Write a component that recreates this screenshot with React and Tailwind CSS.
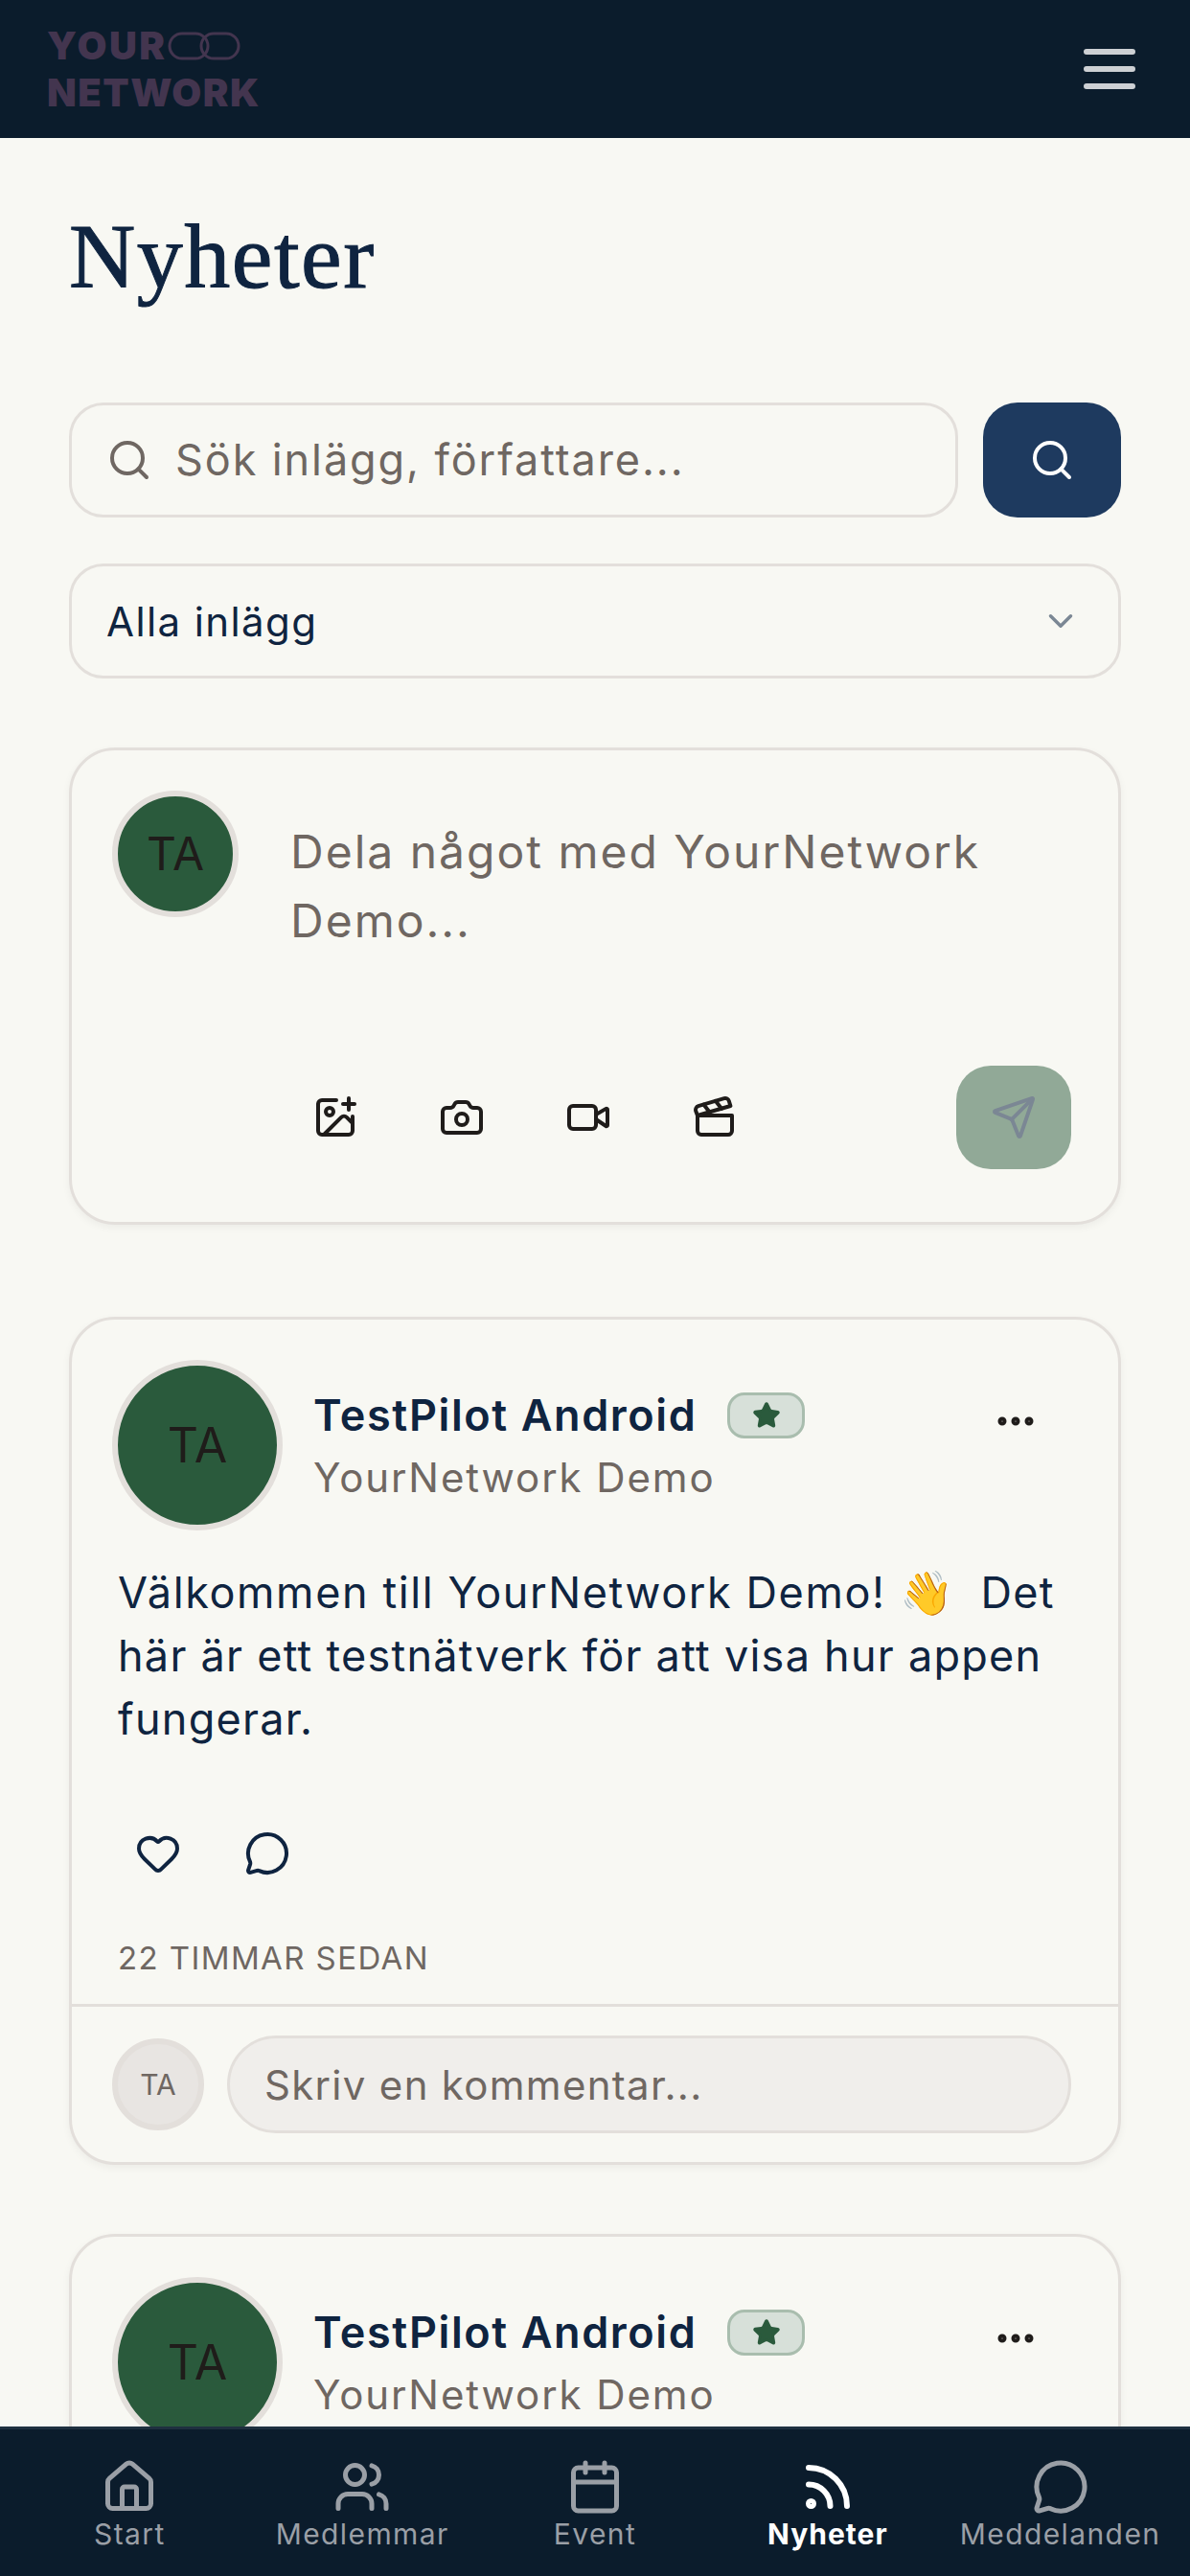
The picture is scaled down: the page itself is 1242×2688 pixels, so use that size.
import {
  Search, ChevronDown, ImagePlus, Camera, Video, Clapperboard, Send, Star, Ellipsis,
  Heart, MessageCircle, House, Users, Calendar, Rss,
} from 'lucide-react'

// the last post only shows its head above the bottom bar
function Post({ preview }) {
  return (
    <article className={`mb-[72px] rounded-[48px] border-[3px] border-[#e3dfdb] bg-[#f8f8f3] shadow-[0_3px_9px_rgba(0,0,0,0.05)] ${preview ? 'h-[500px]' : ''}`}>
      <div className="flex px-[42px] pt-[42px]">
        <div className="flex h-[178px] w-[178px] shrink-0 items-center justify-center rounded-full border-[6px] border-[#e3dfdb] bg-[#2a5a3c] text-[50px] text-[#1f1c1a]">
          TA
        </div>
        <div className="ml-[32px] flex-1 pt-[28px]">
          <div className="flex items-center">
            <span className="text-[45px] font-semibold leading-[54px] tracking-[1.6px] text-[#0f2440]">TestPilot Android</span>
            <span className="ml-[32px] flex h-[48px] w-[81px] items-center justify-center rounded-[18px] border-[3px] border-[#a9bdae] bg-[#d7e0d9]">
              <Star size={30} fill="#2a5a3c" color="#2a5a3c" />
            </span>
            <Ellipsis size={48} color="#1f1c1a" strokeWidth={2.5} className="ml-auto mr-[41px] mt-[12px]" />
          </div>
          <div className="mt-[8px] text-[42px] leading-[54px] tracking-[1.9px] text-[#6f6762]">YourNetwork Demo</div>
        </div>
      </div>
      {!preview && (
        <>
          <p className="mt-[32px] whitespace-nowrap px-[48px] text-[45px] leading-[66px] tracking-[1.26px] text-[#0f2440]">
            <span className="tracking-[1.6px]">Välkommen till YourNetwork Demo!</span> 👋&nbsp; Det<br />här är ett testnätverk för att visa hur appen<br />fungerar.
          </p>
          <div className="ml-[66px] mt-[83px] flex items-center gap-[66px]">
            <Heart size={48} color="#0f2440" />
            <MessageCircle size={48} color="#0f2440" />
          </div>
          <div className="mt-[63px] px-[48px] text-[33px] leading-[44px] tracking-[1.4px] text-[#6f6762]">22 TIMMAR SEDAN</div>
          <div className="mt-[26px] flex items-center gap-[24px] border-t-[3px] border-[#e3dfdb] pb-[30px] pl-[42px] pr-[49px] pt-[30px]">
            <div className="flex h-[96px] w-[96px] shrink-0 items-center justify-center rounded-full border-[6px] border-[#e3dfdb] bg-[#e8e5e2] text-[30px] text-[#6f6762]">
              TA
            </div>
            <div className="flex h-[102px] flex-1 items-center rounded-full border-[3px] border-[#e3dfdb] bg-[#f0eeeb] pl-[36px] text-[42px] tracking-[1.3px] text-[#6f6762]">
              Skriv en kommentar...
            </div>
          </div>
        </>
      )}
    </article>
  )
}

const composerIcons = [ImagePlus, Camera, Video, Clapperboard]

const navItems = [
  { label: 'Start', Icon: House },
  { label: 'Medlemmar', Icon: Users },
  { label: 'Event', Icon: Calendar },
  { label: 'Nyheter', Icon: Rss, active: true },
  { label: 'Meddelanden', Icon: MessageCircle },
]

export default function App() {
  return (
    <div className="flex h-[2688px] w-[1242px] flex-col overflow-hidden bg-[#f8f8f3] font-[Inter,sans-serif]">
      <header className="flex h-[144px] shrink-0 items-center justify-between bg-[#0b1c2c] pl-[49px] pr-[48px]">
        <div className="text-[40px] font-black leading-[49px] text-[#43354f]">
          <div className="flex items-center tracking-[2.5px]">
            YOUR
            <svg width="76" height="30" viewBox="0 0 76 30" fill="none" stroke="#43354f" strokeWidth="3">
              <rect x="2" y="2" width="40" height="26" rx="13" />
              <rect x="35" y="2" width="39" height="26" rx="13" />
            </svg>
          </div>
          <div className="tracking-[1.5px]">NETWORK</div>
        </div>
        <svg width="72" height="72" viewBox="0 0 24 24" fill="none" stroke="#cdd0d4" strokeWidth="2" strokeLinecap="round">
          <path d="M4 6h16M4 12h16M4 18h16" />
        </svg>
      </header>

      <main className="min-h-0 flex-1 overflow-hidden px-[72px]">
        <h1 className="mt-[70px] font-['Liberation_Serif',serif] text-[96px] leading-[108px] tracking-[1.5px] text-[#0f2440] [-webkit-text-stroke:1px_#0f2440]">Nyheter</h1>

        <div className="mt-[98px] flex gap-[26px]">
          <div className="flex h-[120px] flex-1 items-center rounded-[36px] border-[3px] border-[#e3dfdb] pl-[36px] text-[45px] tracking-[1.9px] text-[#6f6762]">
            <Search size={48} color="#6f6762" />
            <span className="ml-[24px]">Sök inlägg, författare...</span>
          </div>
          <button className="flex h-[120px] w-[144px] items-center justify-center rounded-[36px] bg-[#1e3a5f]">
            <Search size={48} color="#ffffff" />
          </button>
        </div>

        <div className="mt-[48px] flex h-[120px] items-center justify-between rounded-[36px] border-[3px] border-[#e3dfdb] pl-[36px] pr-[39px] text-[42px] tracking-[1.4px] text-[#0f2440]">
          Alla inlägg
          <ChevronDown size={42} color="#7b8794" />
        </div>

        <section className="mb-[96px] mt-[72px] h-[498px] rounded-[48px] border-[3px] border-[#e3dfdb] bg-[#f8f8f3] shadow-[0_3px_9px_rgba(0,0,0,0.05)]">
          <div className="flex pl-[42px] pt-[42px]">
            <div className="flex h-[132px] w-[132px] shrink-0 items-center justify-center rounded-full border-[6px] border-[#e3dfdb] bg-[#2a5a3c] text-[48px] text-[#1f1c1a]">
              TA
            </div>
            <p className="ml-[54px] mt-[28px] text-[48px] leading-[72px] tracking-[2px] text-[#6f6762]">
              Dela något med YourNetwork<br />Demo...
            </p>
          </div>
          <div className="ml-[230px] mr-[49px] mt-[115px] flex items-center">
            <div className="flex gap-[42px]">
              {composerIcons.map((Icon, i) => (
                <div key={i} className="flex h-[90px] w-[90px] items-center justify-center">
                  <Icon size={48} color="#1f1c1a" />
                </div>
              ))}
            </div>
            <button className="ml-auto flex h-[108px] w-[120px] items-center justify-center rounded-[36px] bg-[#91a997]">
              <Send size={48} color="#7b8794" />
            </button>
          </div>
        </section>

        <Post />
        <Post preview />
      </main>

      <nav className="grid h-[156px] shrink-0 grid-cols-5 border-t-[3px] border-[#1f3040] bg-[#0b1c2c] px-[14px] pt-[30px]">
        {navItems.map(({ label, Icon, active }) => (
          <div key={label} className={`flex flex-col items-center ${active ? 'text-white' : 'text-[#9a9fa6]'}`}>
            <Icon size={60} strokeWidth={active ? 2.4 : 2} />
            <span className={`text-[30px] leading-[38px] ${active ? 'font-bold tracking-[1px]' : 'tracking-[1.4px]'}`}>{label}</span>
          </div>
        ))}
      </nav>
    </div>
  )
}
